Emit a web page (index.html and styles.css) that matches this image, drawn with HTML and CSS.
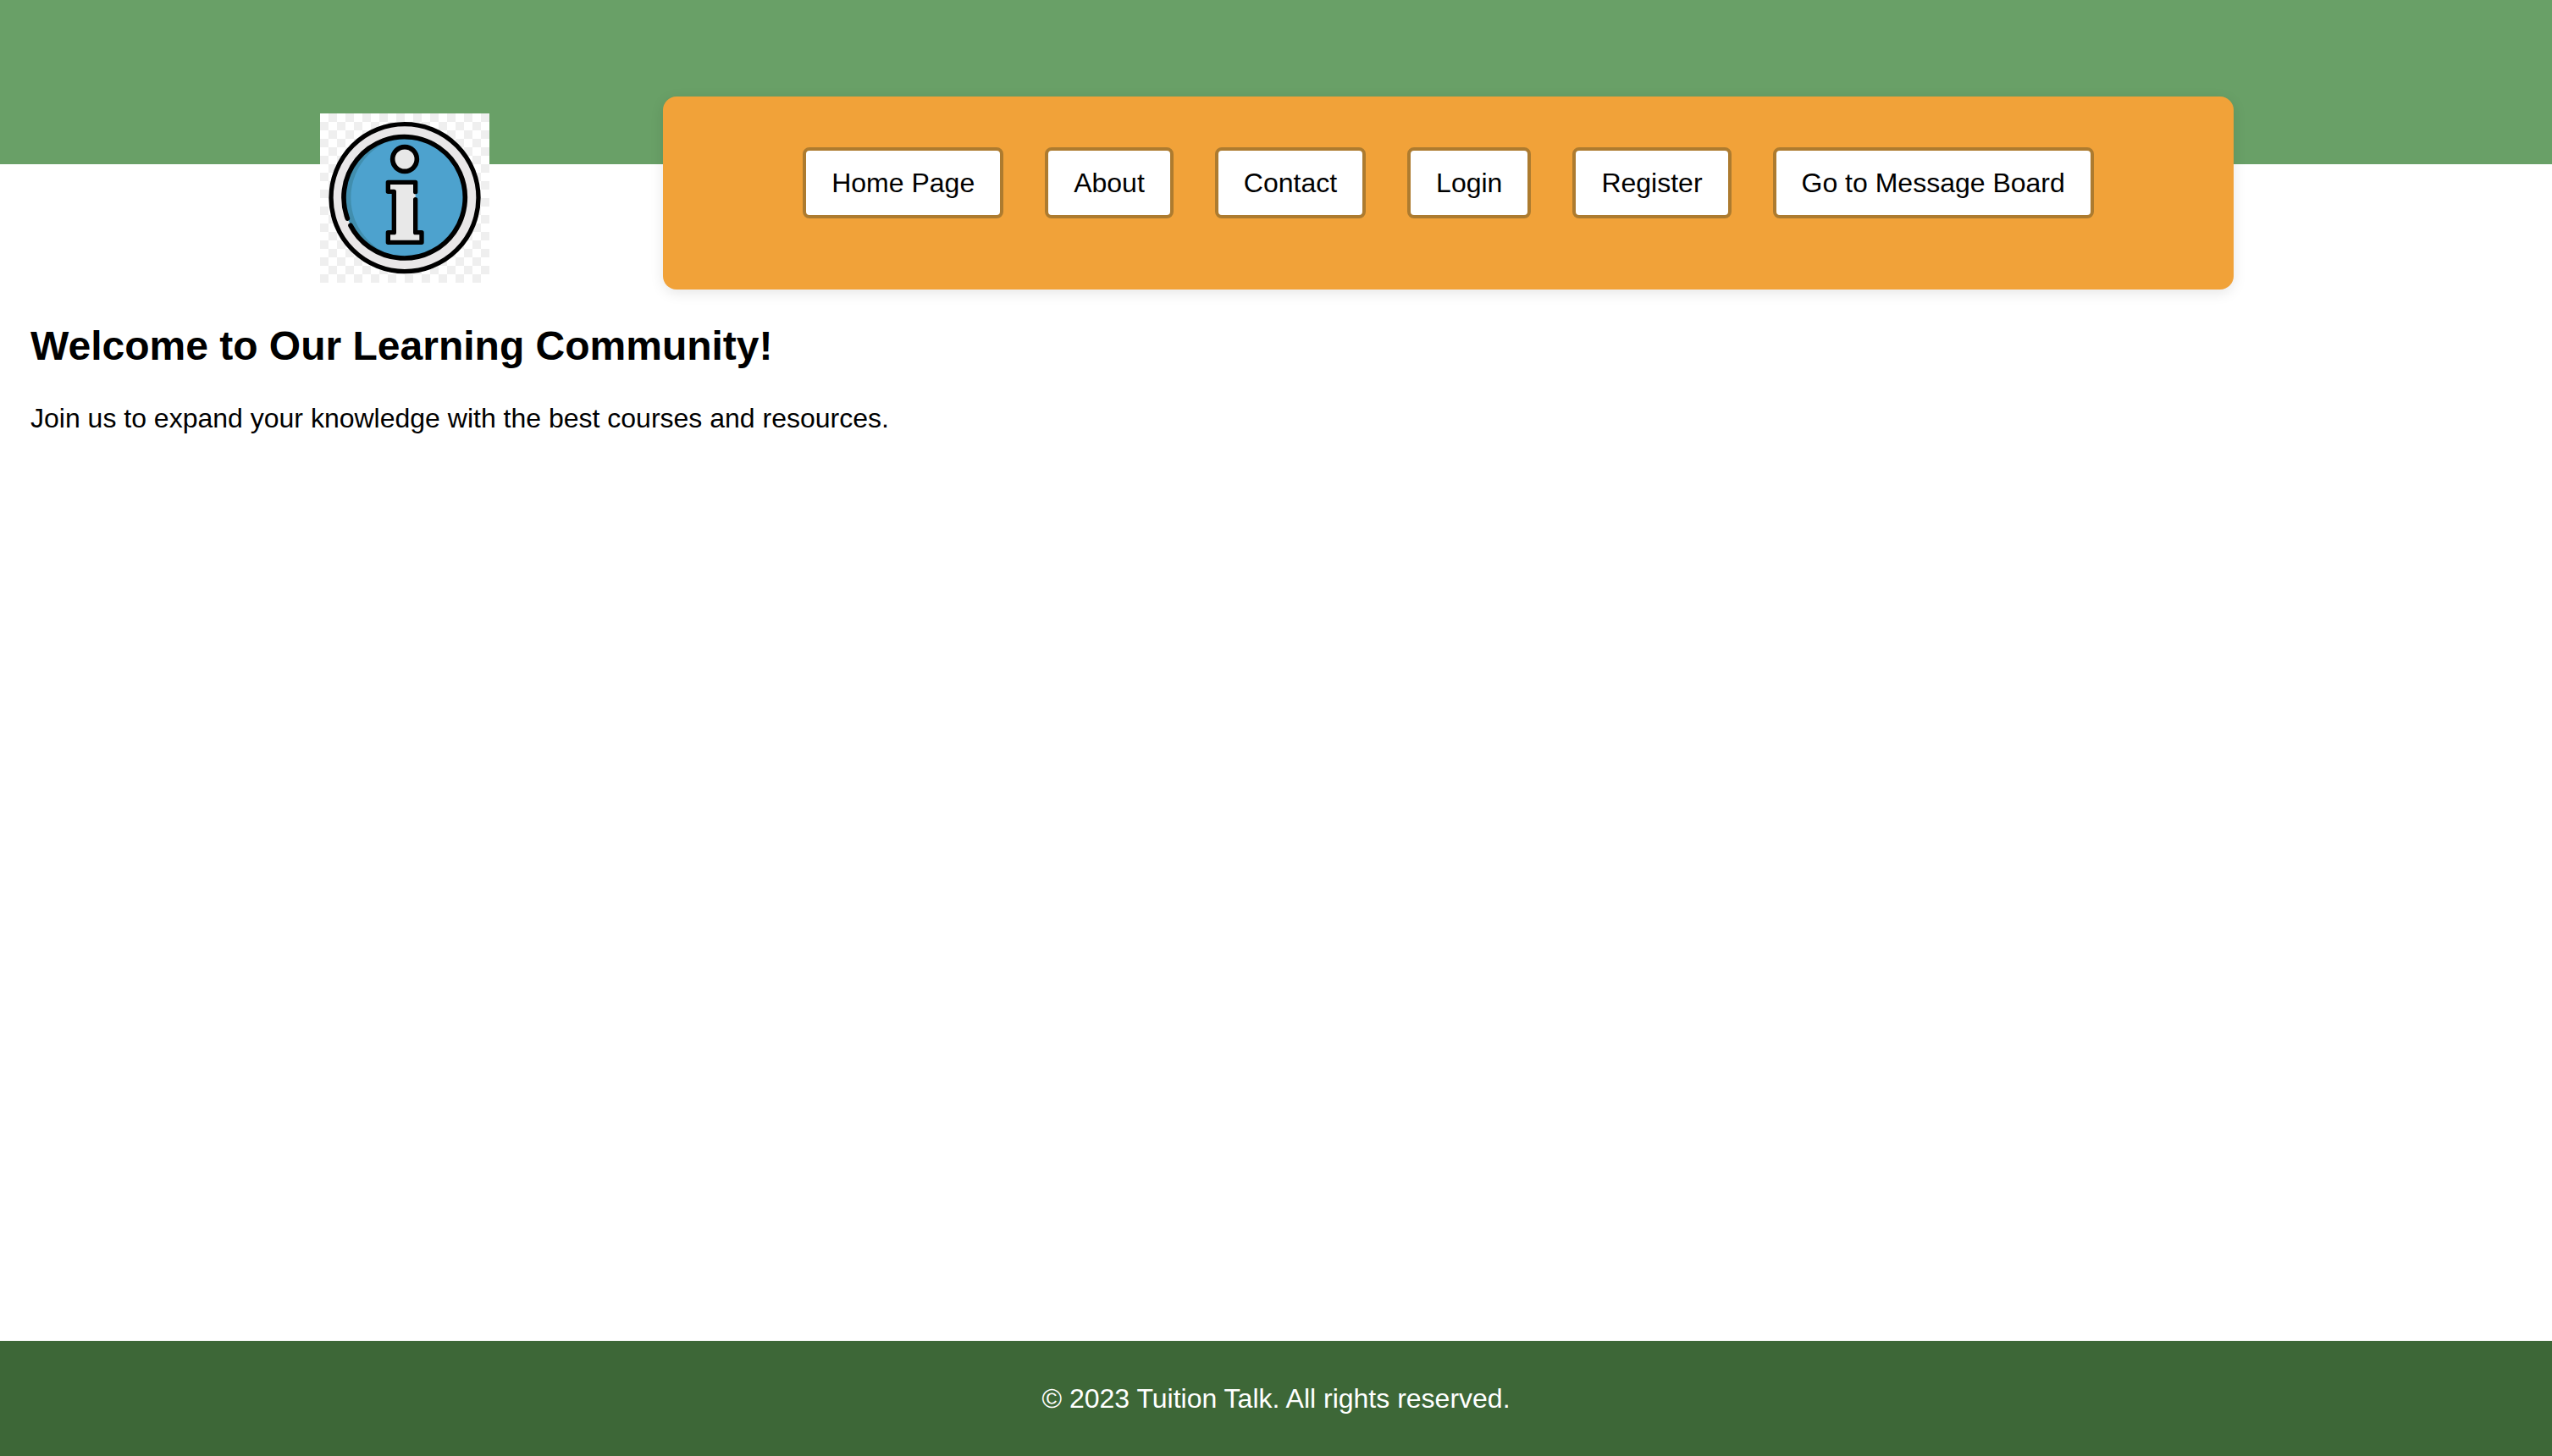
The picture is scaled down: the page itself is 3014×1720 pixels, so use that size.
FILE: index.html
```
<!DOCTYPE html>
<html lang="en">
<head>
<meta charset="utf-8">
<title>Tuition Talk</title>
<link rel="stylesheet" href="styles.css">
</head>
<body>
<header class="header">
  <svg class="logo" viewBox="0 0 600 600" role="img" aria-label="Information">
    <defs>
      <pattern id="checks" width="60" height="60" patternUnits="userSpaceOnUse">
        <rect width="60" height="60" fill="#fff"/>
        <path d="M30 0h30v30H30zM0 30h30v30H0z" fill="#efefef"/>
      </pattern>
      <clipPath id="disc"><circle cx="300" cy="299" r="215"/></clipPath>
    </defs>
    <rect width="600" height="600" fill="url(#checks)"/>
    <circle cx="300" cy="299" r="261" fill="#e9e7e8" stroke="#000" stroke-width="16"/>
    <circle cx="300" cy="299" r="215" fill="#418eae"/>
    <circle cx="326" cy="299" r="217" fill="#4da2ce" clip-path="url(#disc)"/>
    <path d="M97 372A215 215 0 1 1 108 397" fill="none" stroke="#000" stroke-width="17" stroke-linecap="round"/>
    <circle cx="300" cy="162" r="43" fill="#e8e8e8" stroke="#000" stroke-width="17"/>
    <path d="M338 278V244H241V277H262V422H241V457H360V422H338V305Z" fill="#e8e8e8"/>
    <path d="M338 278V244H241V277H262V422H241V457H360V422H338V305" fill="none" stroke="#000" stroke-width="16" stroke-linecap="round" stroke-linejoin="round"/>
  </svg>
  <nav class="nav">
    <a class="nav-link" href="#">Home Page</a>
    <a class="nav-link" href="#">About</a>
    <a class="nav-link" href="#">Contact</a>
    <a class="nav-link" href="#">Login</a>
    <a class="nav-link" href="#">Register</a>
    <a class="nav-link" href="#">Go to Message Board</a>
  </nav>
</header>
<main class="main">
  <h1 class="title">Welcome to Our Learning Community!</h1>
  <p class="intro">Join us to expand your knowledge with the best courses and resources.</p>
</main>
<footer class="footer">
  <p class="copyright">© 2023 Tuition Talk. All rights reserved.</p>
</footer>
</body>
</html>
```
FILE: styles.css
```
* {
  box-sizing: border-box;
}

body {
  display: flex;
  flex-direction: column;
  min-height: 100vh;
  margin: 0;
  background: #fff;
  color: #000;
  font: 32px/36px "Liberation Sans", Arial, sans-serif;
}

/* The green band ends part-way down, so the logo and menu hang below it */
.header {
  display: flex;
  align-items: flex-start;
  gap: 205px;
  padding: 114px 376px 0 378px;
  background: linear-gradient(#69a067 194px, transparent 194px);
}

.logo {
  flex: none;
  width: 200px;
  height: 200px;
  margin-top: 20px;
}

.nav {
  flex: 1;
  display: flex;
  flex-wrap: wrap;
  justify-content: center;
  gap: 49px;
  padding: 60px 40px 84px;
  border-radius: 16px;
  background: #f1a239;
  box-shadow: 0 4px 16px rgba(0, 0, 0, 0.1);
}

.nav-link {
  padding: 20px 30px;
  border: 4px solid #ad7b2f;
  border-radius: 8px;
  background: #fff;
  color: #000;
  text-decoration: none;
}

.main {
  flex: 1;
  padding: 40px 36px;
}

.title {
  margin: 0 0 40px;
  font-size: 48px;
  line-height: 54px;
}

.intro {
  margin: 0;
}

.footer {
  padding: 50px 36px;
  background: #3d6737;
  color: #fff;
  text-align: center;
}

.copyright {
  margin: 0;
}
```
